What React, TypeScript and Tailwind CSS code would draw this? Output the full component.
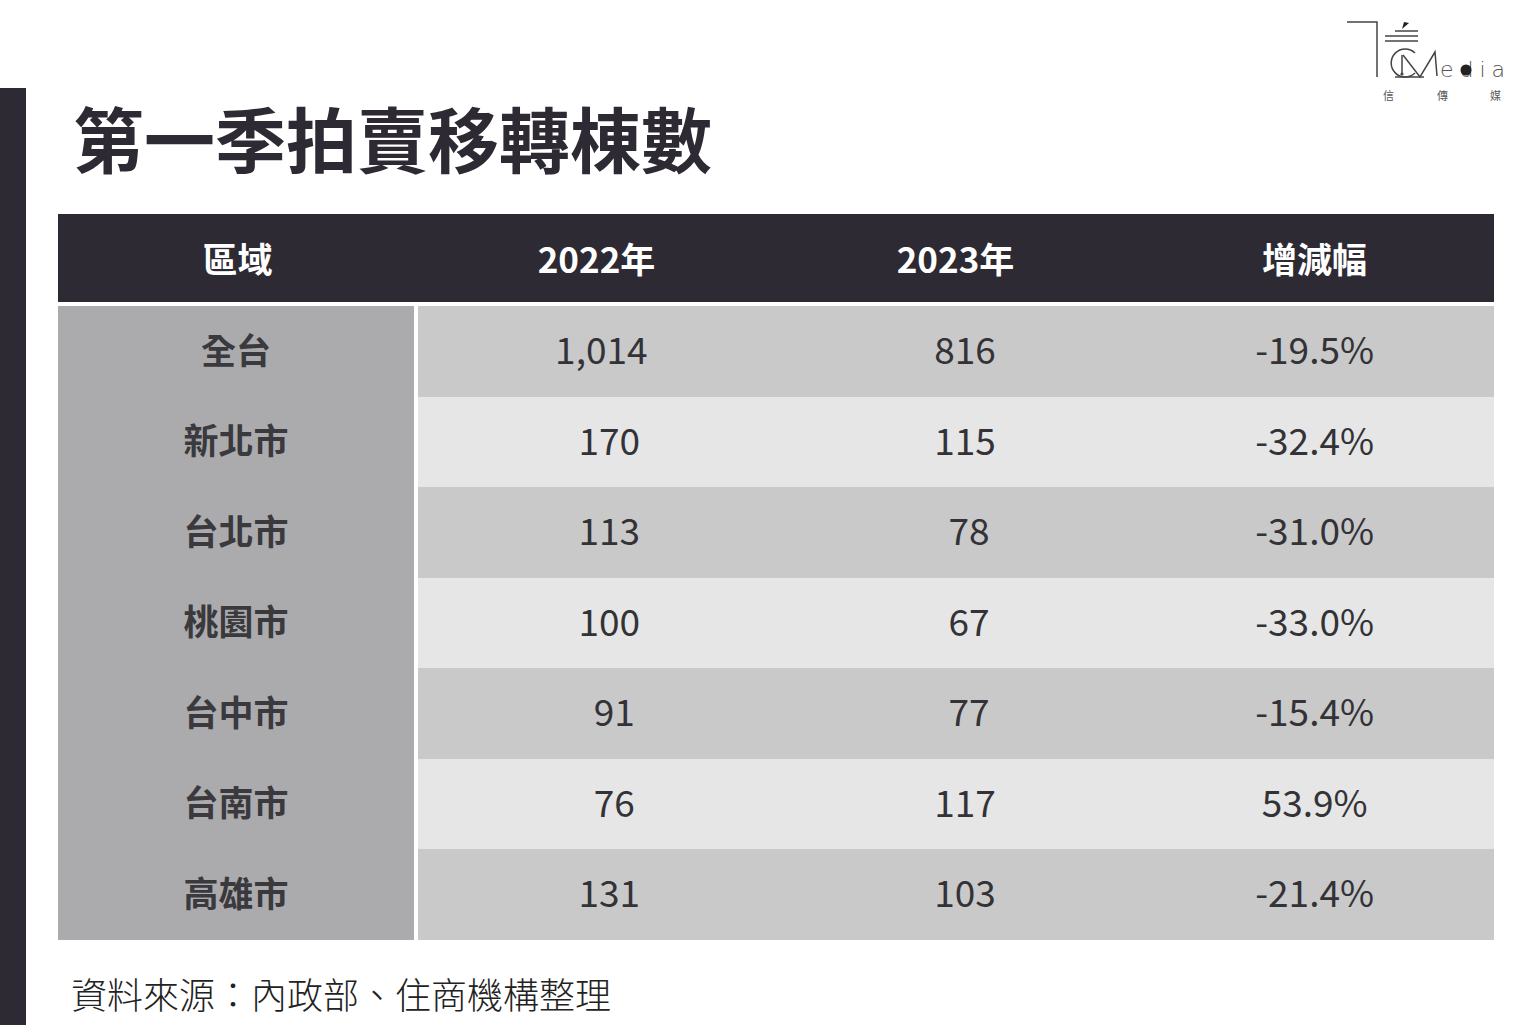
import React from 'react';

const cjk = "font-['Noto_Sans_CJK_TC','Noto_Sans',sans-serif]";

interface Row {
  area: string;
  y2022: string;
  y2023: string;
  change: string;
}

const rows: Row[] = [
  { area: '全台', y2022: '1,014', y2023: '816', change: '-19.5%' },
  { area: '新北市', y2022: '170', y2023: '115', change: '-32.4%' },
  { area: '台北市', y2022: '113', y2023: '78', change: '-31.0%' },
  { area: '桃園市', y2022: '100', y2023: '67', change: '-33.0%' },
  { area: '台中市', y2022: '91', y2023: '77', change: '-15.4%' },
  { area: '台南市', y2022: '76', y2023: '117', change: '53.9%' },
  { area: '高雄市', y2022: '131', y2023: '103', change: '-21.4%' },
];

// numbers in the source sit a little right of centre, depending on their length
const pad2022: Record<number, string> = { 5: 'pl-[8px]', 3: 'pl-[24px]', 2: 'pl-[34px]' };
const pad2023: Record<number, string> = { 3: 'pl-[18px]', 2: 'pl-[26px]' };

const Logo = () => (
  <svg width="170" height="95" viewBox="0 0 170 95" className="absolute right-[26px] top-[14px]">
    <g stroke="#444" fill="none" strokeWidth="1.5">
      <polyline points="7,8 37,8 37,63" />
      <line x1="55" y1="17" x2="78" y2="17" />
      <line x1="45" y1="22" x2="78" y2="22" />
      <line x1="45" y1="27" x2="78" y2="27" />
      <path d="M75,39 A14,14 0 1 0 75,59" />
      <line x1="62" y1="41" x2="62" y2="61" />
      <line x1="55" y1="63" x2="84" y2="63" />
      <polyline points="63,41 80,63 95,38 97,62" />
    </g>
    <path d="M62,15 L64,8 L69,9 Z" fill="#222" />
    <circle cx="62" cy="60" r="1.6" fill="#444" />
    <text x="100" y="63" fontSize="22" fill="#555" letterSpacing="6" fontFamily="'DejaVu Sans', sans-serif" fontWeight="300">edia</text>
    <circle cx="126" cy="56" r="5.5" fill="#222" />
    <g fontSize="11" fill="#555" fontFamily="'Noto Sans CJK TC', sans-serif">
      <text x="43" y="86">信</text>
      <text x="97" y="86">傳</text>
      <text x="150" y="86">媒</text>
    </g>
  </svg>
);

export default function App() {
  return (
    <div className={`relative flex w-[1536px] h-[1025px] bg-white overflow-hidden ${cjk}`}>
      <div className="w-[26px] mt-[88px] bg-[#2d2a34] shrink-0" />
      <Logo />
      <div className="flex flex-col pl-[32px] pt-[101px]">
        <h1 className="ml-[15px] text-[71px] leading-none h-[72px] font-bold text-[#2d2a34]">
          第一季拍賣移轉棟數
        </h1>
        <div className="mt-[41px] w-[1436px]">
          <div className="grid grid-cols-4 h-[88px] bg-[#2d2a34] text-white text-[35px] font-bold">
            <div className="flex items-center justify-center">區域</div>
            <div className="flex items-center justify-center">2022年</div>
            <div className="flex items-center justify-center">2023年</div>
            <div className="flex items-center justify-center">增減幅</div>
          </div>
          <div className="flex mt-[4px]">
            <div className="w-[356px] bg-[#ababad] flex flex-col">
              {rows.map(r => (
                <div key={r.area} className="h-[90.5px] pb-[5px] flex items-center justify-center text-[35px] font-bold text-[#3a393d]">
                  {r.area}
                </div>
              ))}
            </div>
            <div className="w-[4px] bg-white" />
            <div className="flex-1 flex flex-col text-[37px] text-[#333236]">
              {rows.map((r, i) => (
                <div key={r.area} className={`h-[90.5px] pb-[5px] grid grid-cols-3 items-center ${i % 2 === 0 ? 'bg-[#c9c9c9]' : 'bg-[#e6e6e6]'}`}>
                  <div className={`text-center ${pad2022[r.y2022.length]}`}>{r.y2022}</div>
                  <div className={`text-center ${pad2023[r.y2023.length]}`}>{r.y2023}</div>
                  <div className="text-center">{r.change}</div>
                </div>
              ))}
            </div>
          </div>
        </div>
        <p className="mt-[35px] ml-[13px] text-[36px] leading-none font-light text-[#222]">
          資料來源：內政部、住商機構整理
        </p>
      </div>
    </div>
  );
}
